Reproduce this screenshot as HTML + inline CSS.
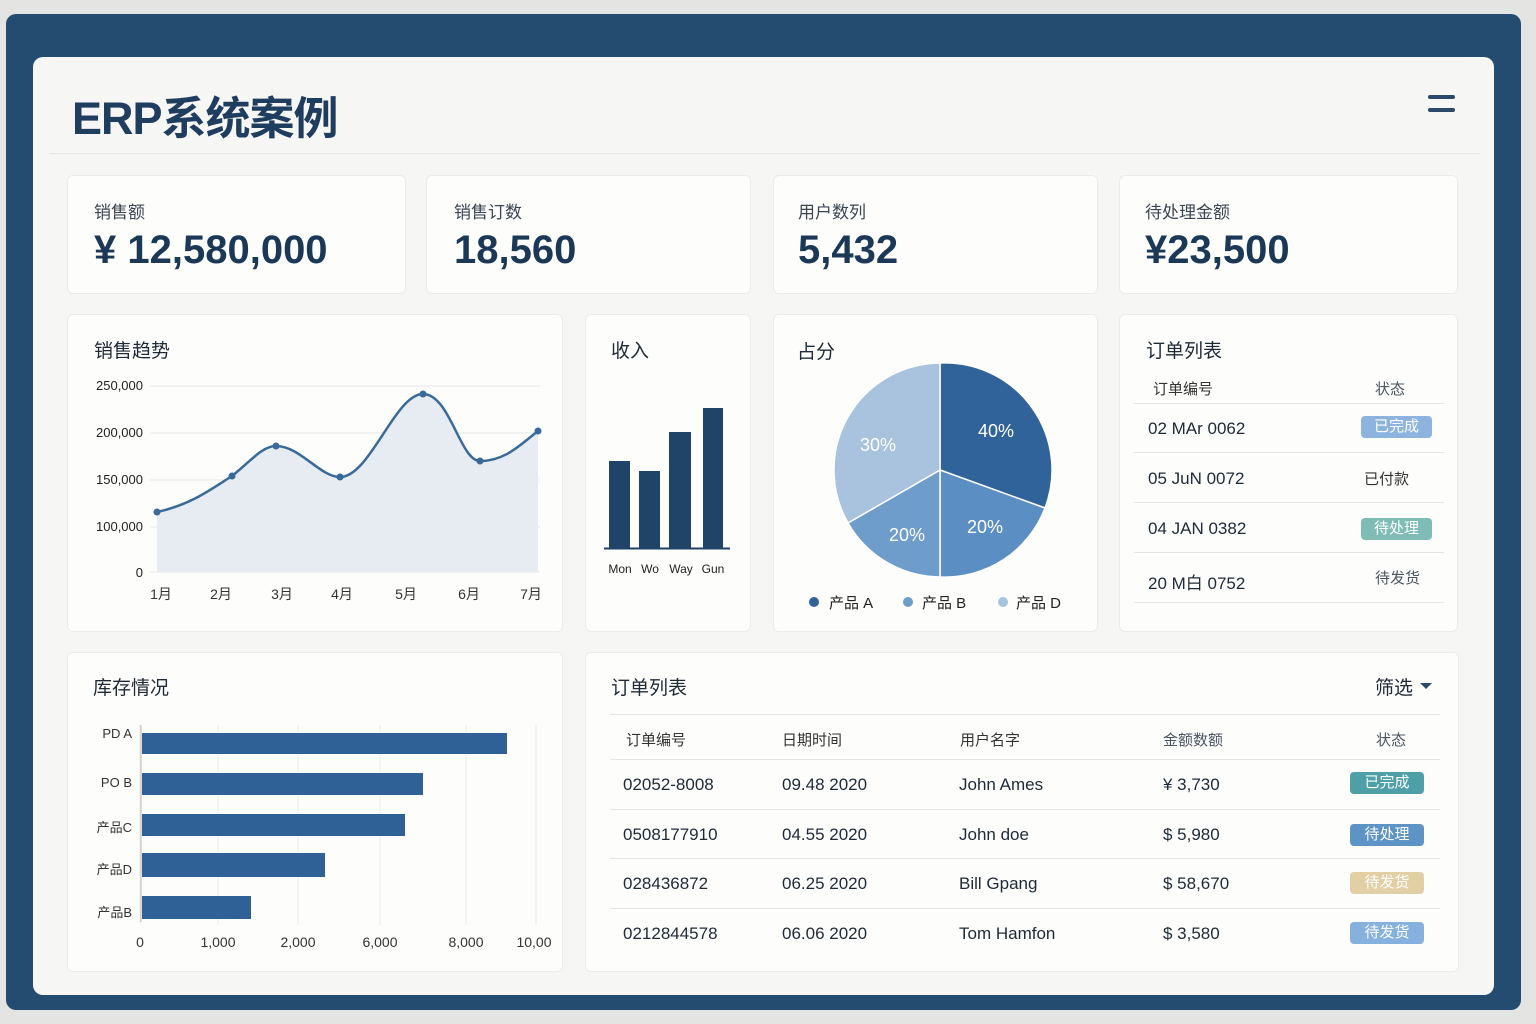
<!DOCTYPE html>
<html><head><meta charset="utf-8"><style>
*{margin:0;padding:0;box-sizing:border-box}
body{width:1536px;height:1024px;background:#e4e5e3;position:relative;overflow:hidden;font-family:"Liberation Sans","Noto Sans CJK SC",sans-serif;color:#1e2a36}
.frame{position:absolute;left:6px;top:14px;width:1515px;height:996px;background:#244b70;border-radius:10px}
.panel{position:absolute;left:33px;top:57px;width:1461px;height:938px;background:#f6f6f4;border-radius:10px}
.card{position:absolute;background:#fdfdfc;border:1px solid #ebebe8;border-radius:6px}
.a{position:absolute;white-space:nowrap}
.lbl{font-size:17px;color:#3a4652}
.val{font-size:40px;font-weight:bold;color:#1c3857}
.ct{font-size:19px;color:#1e2a36}
.badge{position:absolute;height:22px;border-radius:4px;color:#fff;font-size:15px;text-align:center;line-height:22px}
.hl{position:absolute;height:1px;background:#e6e6e3}
.td{font-size:17px;color:#1e2a36}
.th{font-size:15px;color:#4a5560}
</style></head><body>
<div class="frame"></div>
<div class="panel"></div>
<div class="a" style="left:72px;top:82px;font-size:45px;font-weight:bold;color:#1f3d5e;letter-spacing:-1px">ERP系统案例</div>
<div class="a" style="left:1428px;top:95px;width:27px;height:4px;background:#2b4a6a;border-radius:2px"></div>
<div class="a" style="left:1428px;top:108px;width:27px;height:4px;background:#2b4a6a;border-radius:2px"></div>
<div class="hl" style="left:50px;top:153px;width:1430px"></div>

<div class="card" style="left:67px;top:175px;width:339px;height:119px"></div>
<div class="card" style="left:426px;top:175px;width:325px;height:119px"></div>
<div class="card" style="left:773px;top:175px;width:325px;height:119px"></div>
<div class="card" style="left:1119px;top:175px;width:339px;height:119px"></div>
<div class="a lbl" style="left:94px;top:198px">销售额</div>
<div class="a val" style="left:94px;top:228px">¥ 12,580,000</div>
<div class="a lbl" style="left:454px;top:198px">销售订数</div>
<div class="a val" style="left:454px;top:228px">18,560</div>
<div class="a lbl" style="left:798px;top:198px">用户数列</div>
<div class="a val" style="left:798px;top:228px">5,432</div>
<div class="a lbl" style="left:1145px;top:198px">待处理金额</div>
<div class="a val" style="left:1145px;top:228px">¥23,500</div>

<div class="card" style="left:67px;top:314px;width:496px;height:318px"></div>
<div class="card" style="left:585px;top:314px;width:166px;height:318px"></div>
<div class="card" style="left:773px;top:314px;width:325px;height:318px"></div>
<div class="card" style="left:1119px;top:314px;width:339px;height:318px"></div>
<div class="card" style="left:67px;top:652px;width:496px;height:320px"></div>
<div class="card" style="left:585px;top:652px;width:874px;height:320px"></div>

<div class="a ct" style="left:94px;top:336px">销售趋势</div>
<div class="a ct" style="left:611px;top:336px">收入</div>
<div class="a ct" style="left:797px;top:337px">占分</div>
<div class="a ct" style="left:1146px;top:336px">订单列表</div>
<div class="a ct" style="left:93px;top:673px">库存情况</div>
<div class="a ct" style="left:611px;top:673px">订单列表</div>
<div class="a ct" style="left:1375px;top:673px">筛选</div>

<svg class="a" style="left:0;top:0" width="1536" height="1024" font-family="Liberation Sans,Noto Sans CJK SC,sans-serif">
<g stroke="#e6e6e3" stroke-width="1">
<line x1="150" y1="386" x2="540" y2="386"/><line x1="150" y1="433" x2="540" y2="433"/><line x1="150" y1="480" x2="540" y2="480"/><line x1="150" y1="527" x2="540" y2="527"/><line x1="150" y1="572" x2="540" y2="572"/>
</g>
<path d="M157,512 C190,505 210,490 232,476 C250,462 262,446 276,446 C300,446 320,477 340,477 C370,477 395,394 423,394 C450,394 460,461 480,461 C505,461 520,445 538,431 L538,572 L157,572 Z" fill="#e6ecf2"/>
<path d="M157,512 C190,505 210,490 232,476 C250,462 262,446 276,446 C300,446 320,477 340,477 C370,477 395,394 423,394 C450,394 460,461 480,461 C505,461 520,445 538,431" fill="none" stroke="#3a6a9a" stroke-width="2.5"/>
<g fill="#3a6a9a"><circle cx="157" cy="512" r="3.5"/><circle cx="232" cy="476" r="3.5"/><circle cx="276" cy="446" r="3.5"/><circle cx="340" cy="477" r="3.5"/><circle cx="423" cy="394" r="3.5"/><circle cx="480" cy="461" r="3.5"/><circle cx="538" cy="431" r="3.5"/></g>
<g font-size="13" fill="#222" text-anchor="end"><text x="143" y="390">250,000</text><text x="143" y="437">200,000</text><text x="143" y="484">150,000</text><text x="143" y="531">100,000</text><text x="143" y="577">0</text></g>
<g font-size="14" fill="#333" text-anchor="middle"><text x="161" y="599">1月</text><text x="221" y="599">2月</text><text x="282" y="599">3月</text><text x="342" y="599">4月</text><text x="406" y="599">5月</text><text x="469" y="599">6月</text><text x="531" y="599">7月</text></g>

<g fill="#1f4468"><rect x="609" y="461" width="21" height="88"/><rect x="639" y="471" width="21" height="78"/><rect x="669" y="432" width="22" height="117"/><rect x="703" y="408" width="20" height="141"/></g>
<line x1="604" y1="548.5" x2="730" y2="548.5" stroke="#1f4468" stroke-width="2"/>
<g font-size="12" fill="#222" text-anchor="middle"><text x="620" y="573">Mon</text><text x="650" y="573">Wo</text><text x="681" y="573">Way</text><text x="713" y="573">Gun</text></g>

<g stroke="#fff" stroke-width="1.5">
<path d="M940,470 L940,363 A107,107 0 0 1 1045,508 Z" fill="#2f6399"/>
<path d="M940,470 L1045,508 A107,107 0 0 1 940,577 Z" fill="#5b8fc4"/>
<path d="M940,470 L940,577 A107,107 0 0 1 848,523 Z" fill="#6e9ccb"/>
<path d="M940,470 L848,523 A107,107 0 0 1 940,363 Z" fill="#a9c3df"/>
</g>
<g font-size="18" fill="#fff" text-anchor="middle"><text x="996" y="437">40%</text><text x="878" y="451">30%</text><text x="985" y="533">20%</text><text x="907" y="541">20%</text></g>
<circle cx="814" cy="602" r="5" fill="#2f6399"/><circle cx="908" cy="602" r="5" fill="#6e9ccb"/><circle cx="1003" cy="602" r="5" fill="#a9c3df"/>
<g font-size="15" fill="#222"><text x="829" y="608">产品 A</text><text x="922" y="608">产品 B</text><text x="1016" y="608">产品 D</text></g>

<g stroke="#ececea"><line x1="140" y1="725" x2="140" y2="925"/><line x1="218" y1="725" x2="218" y2="925"/><line x1="298" y1="725" x2="298" y2="925"/><line x1="380" y1="725" x2="380" y2="925"/><line x1="466" y1="725" x2="466" y2="925"/><line x1="536" y1="725" x2="536" y2="925"/></g>
<line x1="141" y1="725" x2="141" y2="922" stroke="#bbb"/>
<g fill="#2f6196"><rect x="142" y="733" width="365" height="21"/><rect x="142" y="773" width="281" height="22"/><rect x="142" y="814" width="263" height="22"/><rect x="142" y="853" width="183" height="24"/><rect x="142" y="896" width="109" height="23"/></g>
<g font-size="13" fill="#333" text-anchor="end"><text x="132" y="738">PD A</text><text x="132" y="787">PO B</text><text x="132" y="832">产品C</text><text x="132" y="874">产品D</text><text x="132" y="917">产品B</text></g>
<g font-size="14" fill="#333" text-anchor="middle"><text x="140" y="947">0</text><text x="218" y="947">1,000</text><text x="298" y="947">2,000</text><text x="380" y="947">6,000</text><text x="466" y="947">8,000</text><text x="534" y="947">10,00</text></g>
<path d="M1420,683 L1432,683 L1426,689 Z" fill="#2b4a6a"/>
</svg>

<div class="a th" style="left:1153px;top:378px;color:#333">订单编号</div>
<div class="a th" style="left:1375px;top:378px">状态</div>
<div class="hl" style="left:1134px;top:403px;width:310px"></div>
<div class="hl" style="left:1134px;top:452px;width:310px"></div>
<div class="hl" style="left:1134px;top:502px;width:310px"></div>
<div class="hl" style="left:1134px;top:552px;width:310px"></div>
<div class="hl" style="left:1134px;top:602px;width:310px"></div>
<div class="a td" style="left:1148px;top:419px">02 MAr 0062</div>
<div class="a td" style="left:1148px;top:469px">05 JuN 0072</div>
<div class="a td" style="left:1148px;top:519px">04 JAN 0382</div>
<div class="a td" style="left:1148px;top:569px">20 M白 0752</div>
<div class="badge" style="left:1361px;top:416px;width:71px;background:#8cb4de">已完成</div>
<div class="a th" style="left:1364px;top:468px;color:#333">已付款</div>
<div class="badge" style="left:1361px;top:518px;width:71px;background:#7fbcb6">待处理</div>
<div class="a th" style="left:1375px;top:567px">待发货</div>

<div class="hl" style="left:610px;top:714px;width:830px"></div>
<div class="a th" style="left:626px;top:729px;color:#333">订单编号</div>
<div class="a th" style="left:782px;top:729px;color:#333">日期时间</div>
<div class="a th" style="left:960px;top:729px;color:#333">用户名字</div>
<div class="a th" style="left:1163px;top:729px">金额数额</div>
<div class="a th" style="left:1376px;top:729px">状态</div>
<div class="hl" style="left:610px;top:759px;width:830px"></div>
<div class="hl" style="left:610px;top:809px;width:830px"></div>
<div class="hl" style="left:610px;top:858px;width:830px"></div>
<div class="hl" style="left:610px;top:908px;width:830px"></div>
<div class="a td" style="left:623px;top:775px">02052-8008</div><div class="a td" style="left:782px;top:775px">09.48 2020</div><div class="a td" style="left:959px;top:775px">John Ames</div><div class="a td" style="left:1163px;top:775px">¥ 3,730</div>
<div class="a td" style="left:623px;top:825px">0508177910</div><div class="a td" style="left:782px;top:825px">04.55 2020</div><div class="a td" style="left:959px;top:825px">John doe</div><div class="a td" style="left:1163px;top:825px">$ 5,980</div>
<div class="a td" style="left:623px;top:874px">028436872</div><div class="a td" style="left:782px;top:874px">06.25 2020</div><div class="a td" style="left:959px;top:874px">Bill Gpang</div><div class="a td" style="left:1163px;top:874px">$ 58,670</div>
<div class="a td" style="left:623px;top:924px">0212844578</div><div class="a td" style="left:782px;top:924px">06.06 2020</div><div class="a td" style="left:959px;top:924px">Tom Hamfon</div><div class="a td" style="left:1163px;top:924px">$ 3,580</div>
<div class="badge" style="left:1350px;top:772px;width:74px;background:#4f9fa8">已完成</div>
<div class="badge" style="left:1350px;top:824px;width:74px;background:#5e93c6">待处理</div>
<div class="badge" style="left:1350px;top:872px;width:74px;background:#e2cfa4">待发货</div>
<div class="badge" style="left:1350px;top:922px;width:74px;background:#86b1df">待发货</div>
</body></html>
